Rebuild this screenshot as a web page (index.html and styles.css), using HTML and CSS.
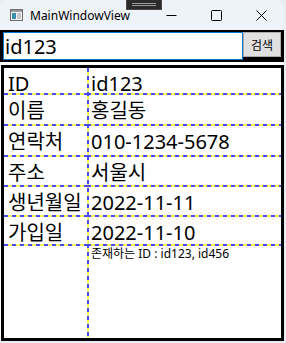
FILE: index.html
```html
<!DOCTYPE html>
<html lang="ko">
<head>
  <meta charset="UTF-8" />
  <title>MainWindowView</title>
  <link rel="stylesheet" href="styles.css">
</head>
<body>
<div class="window">
  <div class="titlebar">
    <svg class="app-icon" width="13" height="12" viewBox="0 0 13 12">
      <rect x="0.5" y="0.5" width="12" height="11" fill="#f4f4f4" stroke="#6d6d6d"/>
      <rect x="1" y="1" width="11" height="2" fill="#9a9a9a"/>
      <rect x="2" y="4" width="4" height="6" fill="#3a8fb0"/>
      <rect x="7" y="4" width="4" height="6" fill="#c9c9c9"/>
    </svg>
    <span class="title">MainWindowView</span>
    <div class="caption">
      <span class="cap">
        <svg width="11" height="11" viewBox="0 0 11 11"><path d="M0.5 5.5H10.5" stroke="#000" stroke-width="1"/></svg>
      </span>
      <span class="cap">
        <svg width="11" height="11" viewBox="0 0 11 11"><rect x="0.5" y="0.5" width="10" height="10" rx="1" fill="none" stroke="#000"/></svg>
      </span>
      <span class="cap">
        <svg width="11" height="11" viewBox="0 0 11 11"><path d="M0.5 0.5L10.5 10.5M10.5 0.5L0.5 10.5" stroke="#000" stroke-width="1"/></svg>
      </span>
    </div>
    <div class="tools"><span></span><span></span></div>
  </div>

  <div class="client">
    <div class="search">
      <div class="query">id123</div>
      <button class="search-btn">검색</button>
    </div>

    <div class="sheet">
      <div class="cell key">ID</div><div class="cell val">id123</div>
      <div class="cell key">이름</div><div class="cell val">홍길동</div>
      <div class="cell key">연락처</div><div class="cell val">010-1234-5678</div>
      <div class="cell key">주소</div><div class="cell val">서울시</div>
      <div class="cell key">생년월일</div><div class="cell val">2022-11-11</div>
      <div class="cell key">가입일</div><div class="cell val">2022-11-10</div>
      <div class="cell key last"></div><div class="cell val last note">존재하는 ID : id123, id456</div>
    </div>
  </div>
</div>
</body>
</html>
```

FILE: styles.css
```css
body{
  margin:0;
  width:286px;
  height:343px;
  overflow:hidden;
  background:#e9edf3;
  font-family:"Noto Sans","Noto Sans CJK KR",sans-serif;
}
.window{
  width:284px;
  height:341px;
  display:flex;
  flex-direction:column;
  background:#eef2f9;
  border-radius:7px 7px 0 0;
  position:relative;
}
.titlebar{height:30px;display:flex;align-items:center;position:relative}
.app-icon{margin-left:10px;margin-right:7px}
.title{font-size:12px;color:#000}
.caption{margin-left:auto;display:flex;height:30px}
.cap{width:45px;display:flex;align-items:center;justify-content:center}
.tools{
  position:absolute;left:126px;top:0;width:36px;height:10px;
  background:#2b2b2b;border:1px solid #4a4a4a;border-top:none;
  display:flex;flex-direction:column;justify-content:center;gap:1px;padding:0 5px;box-sizing:border-box;
}
.tools span{height:1px;background:#9a9a9a}

.client{flex:1;display:flex;flex-direction:column;background:#fff}
.search{display:flex;align-items:flex-start;background:#000;padding:2px 3px 2px 3px}
.query{
  flex:1;height:28px;box-sizing:border-box;
  border:1px solid #0078d7;background:#fff;
  font-size:20px;line-height:28px;padding-left:1px;color:#000;
}
.search-btn{
  width:38px;height:25px;margin:0;padding:0;
  background:#e1e1e1;border:1px solid #adadad;
  font-family:"Noto Sans CJK KR",sans-serif;font-size:12px;color:#000;
}

.sheet{
  flex:1;margin-top:3px;margin-left:1px;
  border:3px solid #000;
  display:grid;
  grid-template-columns:83px 1fr;
  grid-template-rows:27px 31px 31px 30px 30px 29px 1fr;
  background:repeating-linear-gradient(180deg,#4a4af2 0 4px,#f4f45a 4px 8px) 83px 0/2px 100% no-repeat;
}
.cell{
  font-size:20px;line-height:27px;padding-top:2px;color:#000;white-space:nowrap;
  background:repeating-linear-gradient(90deg,#4a4af2 0 4px,#f4f45a 4px 8px) 0 100%/100% 2px no-repeat;
}
.key{padding-left:4px}
.val{padding-left:4px}
.last{background:none}
.note{font-size:12px;line-height:16px;padding-top:0}
```
